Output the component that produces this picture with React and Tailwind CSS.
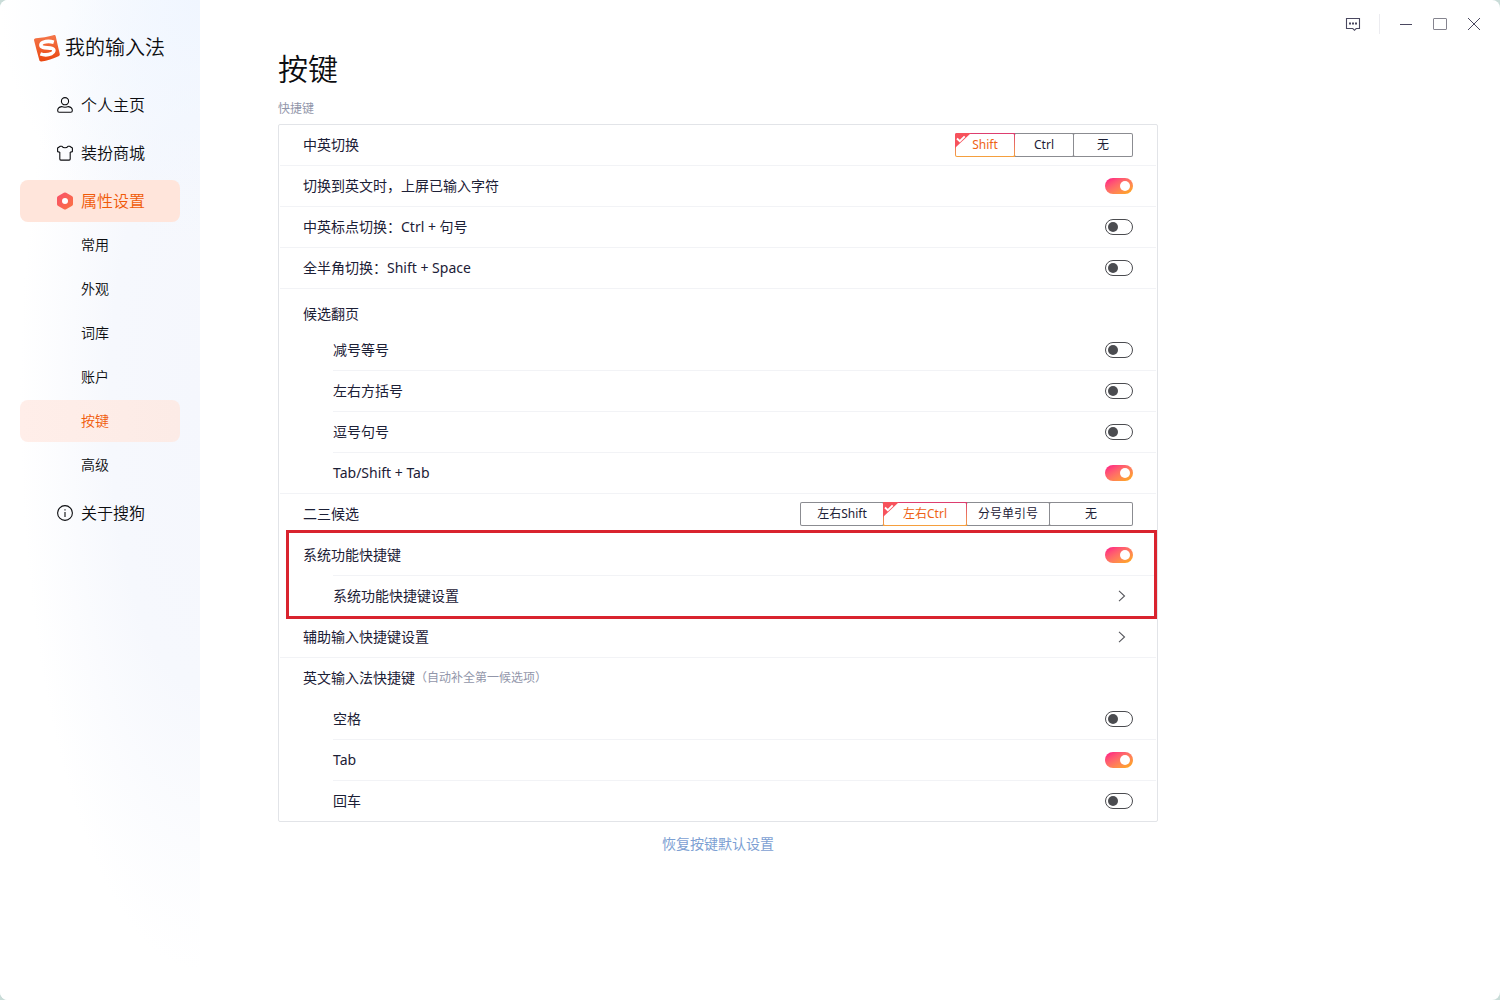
import React, { useState } from 'react'

const SUB_ITEMS = ['常用', '外观', '词库', '账户', '按键', '高级']

const UserIcon = () => (
    <svg width="16" height="16" viewBox="0 0 16 16" fill="none" stroke="currentColor" strokeWidth="1.1">
        <circle cx="8" cy="4.2" r="3.6" />
        <path d="M4.600 9.600c1 .5 2.100.7 3.400.7s2.400-.2 3.400-.7c2.200.4 3.900 1.700 3.900 3.600v.6c0 .9-.6 1.500-1.500 1.500H2.200c-.9 0-1.500-.6-1.500-1.500v-.6c0-1.900 1.700-3.200 3.900-3.600z" />
    </svg>
)

const ShirtIcon = () => (
    <svg width="16" height="16" viewBox="0 0 16 16" fill="none" stroke="currentColor" strokeWidth="1.1" strokeLinejoin="round">
        <path d="M5 1.200c.6 1.100 1.700 1.600 3 1.600s2.400-.5 3-1.600h1.700L15.400 3v3.600l-2.200.6v6.900c0 .6-.4 1-1 1H3.800c-.6 0-1-.4-1-1V7.200L.600 6.600V3l2.700-1.800z" />
    </svg>
)

const SettingsIcon = () => (
    <svg width="16" height="18" viewBox="0 0 16 18">
        <defs>
            <linearGradient id="hex" x1="0" y1="0" x2="1" y2="1">
                <stop offset="0" stopColor="#f94f6c" />
                <stop offset="1" stopColor="#fb7440" />
            </linearGradient>
        </defs>
        <path d="M6.900.700a2.200 2.200 0 0 1 2.200 0l5.700 3.200A2.200 2.200 0 0 1 16 5.900v6.200a2.200 2.200 0 0 1-1.200 2l-5.700 3.200a2.200 2.200 0 0 1-2.200 0l-5.700-3.200a2.200 2.200 0 0 1-1.200-2V5.900a2.200 2.200 0 0 1 1.200-2z" fill="url(#hex)" />
        <circle cx="8" cy="9" r="3" fill="#fff" />
    </svg>
)

const InfoIcon = () => (
    <svg width="16" height="16" viewBox="0 0 16 16" fill="none" stroke="currentColor" strokeWidth="1.1">
        <circle cx="8" cy="8" r="7.400" />
        <path d="M8 7v5" />
        <path d="M8 4.200v1.400" />
    </svg>
)

const Logo = () => (
    <svg width="28" height="28" viewBox="0 0 28 28">
        <defs>
            <linearGradient id="logo" x1="0" y1="0" x2="0" y2="1">
                <stop offset="0" stopColor="#f4764a" />
                <stop offset="1" stopColor="#ea4710" />
            </linearGradient>
        </defs>
        <path d="M3 4.200C8.500 3.800 15 2.700 20.400 1.200c1.300-.3 2.100.1 2.400 1.300 1.200 5.700 2.500 11.400 3.900 17.300.3 1.200-.1 1.900-1.200 2.400-5.500 2.500-11.200 4.300-17 5.300-1.200.2-1.900-.2-2.200-1.400C4.500 19.600 2.700 13 1.100 6.500.800 5.100 1.500 4.300 3 4.200z" fill="url(#logo)" />
        <path d="M20.800 8.200c-3.800-1.200-7.800-1-10.700.2-2.900 1.300-2.900 3.900-.2 4.900 2.600.9 6.400.2 9 1.100 2.900 1 2.500 3.900-.5 5.200-3.300 1.500-7.300 1.600-11 .3" fill="none" stroke="#fff" strokeWidth="3.600" />
    </svg>
)

const NavItem = ({ icon, label, active }) => (
    <a
        href="#"
        className={`flex h-[42px] items-center gap-2 rounded-lg pl-[37px] text-base ${active ? 'bg-[#ffe5db] text-[#f05a08]' : 'text-[#0c0d10]'}`}
    >
        {icon}
        {label}
    </a>
)

const SubItem = ({ label, active }) => (
    <a
        href="#"
        className={`flex h-[42px] items-center rounded-lg pl-[61px] text-sm ${active ? 'bg-linear-to-r from-[#ffeee9] to-[#fcebe6] text-[#f05a08]' : 'text-[#0c0d10]'}`}
    >
        {label}
    </a>
)

const Sidebar = () => (
    <aside className="w-[200px] shrink-0 bg-[radial-gradient(ellipse_200px_240px_at_100%_0%,#f0f6ff_0%,transparent_100%),radial-gradient(ellipse_180px_570px_at_100%_40%,#f5f7fd_0%,#f6f8fd_50%,#ffffff_100%)] px-5 font-[350]">
        <div className="flex h-[84px] items-center gap-1 pt-3 pl-[13px] text-xl text-[#0c0d10]">
            <Logo />
            我的输入法
        </div>
        <nav className="flex flex-col gap-1.5">
            <NavItem icon={<UserIcon />} label="个人主页" />
            <NavItem icon={<ShirtIcon />} label="装扮商城" />
            <div className="flex flex-col gap-0.5">
                <NavItem icon={<SettingsIcon />} label="属性设置" active />
                {SUB_ITEMS.map(item => <SubItem key={item} label={item} active={item === '按键'} />)}
            </div>
            <NavItem icon={<InfoIcon />} label="关于搜狗" />
        </nav>
    </aside>
)

const TitleBar = () => (
    <header className="flex h-12 items-center justify-end pr-[19px] text-[#4a4860]">
        <button aria-label="反馈">
            <svg width="16" height="16" viewBox="0 0 16 16" fill="none" stroke="currentColor" strokeWidth="1.100">
                <path d="M1.500 2.500h13v10h-3.300L9.500 14.300 7.800 12.500H1.500z" />
                <path d="M4 7.500h2M7 7.500h2M10 7.500h2" strokeWidth="2" />
            </svg>
        </button>
        <span className="mr-[19px] ml-[18px] h-5 w-px bg-[#ececf0]" />
        <div className="flex items-center gap-5">
            <button aria-label="最小化">
                <svg width="14" height="14" viewBox="0 0 14 14"><path d="M1 7.500h12" stroke="currentColor" /></svg>
            </button>
            <button aria-label="最大化">
                <svg width="14" height="14" viewBox="0 0 14 14"><rect x=".5" y="1.500" width="13" height="11" rx=".5" fill="none" stroke="#85848f" /></svg>
            </button>
            <button aria-label="关闭">
                <svg width="14" height="14" viewBox="0 0 14 14"><path d="M1 1l12 12M13 1L1 13" stroke="currentColor" /></svg>
            </button>
        </div>
    </header>
)

const Row = ({ indent, line = true, children }) => (
    <div className={`mr-px ${indent ? 'ml-[54px]' : 'ml-px'} ${line ? 'border-b border-[#f2f3f6]' : ''}`}>
        <div className={`flex h-10 items-center justify-between pr-[23px] ${indent ? '' : 'pl-[23px]'}`}>
            {children}
        </div>
    </div>
)

const Divider = ({ indent }) => (
    <div className={`mr-px border-t border-[#f2f3f6] ${indent ? 'ml-[54px]' : 'ml-px'}`} />
)

const ToggleRow = ({ id, label, on = false, indent, line }) => {
    const [checked, setChecked] = useState(on)
    return (
        <Row indent={indent} line={line}>
            <label htmlFor={id}>{label}</label>
            <input
                id={id}
                type="checkbox"
                checked={checked}
                onChange={e => setChecked(e.target.checked)}
                className="flex h-4 w-7 appearance-none items-center rounded-full border border-[#4b4c50] px-0.5 before:size-2.5 before:rounded-full before:bg-[#4b4c50] checked:justify-end checked:border-0 checked:bg-linear-to-br checked:from-[#ff2680] checked:from-10% checked:to-[#ff9f2c] checked:to-85% checked:px-[3px] checked:before:bg-white"
            />
        </Row>
    )
}

const ChoiceRow = ({ name, label, options, initial, wide, line }) => {
    const [value, setValue] = useState(initial)
    return (
        <Row line={line}>
            <span id={name}>{label}</span>
            <div role="radiogroup" aria-labelledby={name} className="flex text-xs">
                {options.map((option, i) => {
                    const selected = option === value
                    return (
                        <label
                            key={option}
                            className={`relative flex h-6 overflow-hidden p-px first:rounded-l-xs last:rounded-r-xs ${wide ? 'w-[84px]' : 'w-[60px]'} ${i > 0 ? '-ml-px' : ''} ${selected ? 'z-10 bg-linear-to-b from-[#dc3b70] to-[#f5a13c] text-[#ee6216]' : 'bg-[#8b8c91]'}`}
                        >
                            <input
                                type="radio"
                                name={name}
                                checked={selected}
                                onChange={() => setValue(option)}
                                className="sr-only"
                            />
                            <span className="flex flex-1 items-center justify-center rounded-[1px] bg-white">{option}</span>
                            {selected && (
                                <svg className="absolute top-0 left-0" width="16" height="15" viewBox="0 0 16 15">
                                    <path d="M0 0h16L0 15z" fill="#f7525c" />
                                    <path d="M2 5.500l2.800 2.700 4.900-4.900" fill="none" stroke="#fff" strokeWidth="1.900" />
                                </svg>
                            )}
                        </label>
                    )
                })}
            </div>
        </Row>
    )
}

const LinkRow = ({ label, indent }) => (
    <Row indent={indent}>
        <button className="flex h-full flex-1 items-center justify-between pr-[7px]">
            {label}
            <svg width="8" height="12" viewBox="0 0 8 12" fill="none" stroke="#55565c" strokeWidth="1.100">
                <path d="M1 .800L6.500 6 1 11.200" />
            </svg>
        </button>
    </Row>
)

export default function App() {
    return (
        <div lang="zh-CN" className="min-h-screen bg-[#c9dcd8] font-['Noto_Sans','Noto_Sans_CJK_SC',sans-serif]">
            <div className="flex min-h-screen overflow-hidden rounded-lg bg-white">
                <Sidebar />
                <main className="min-w-0 flex-1">
                    <TitleBar />
                    <div className="max-w-[958px] pl-[78px] text-sm text-[#1c2036]">
                        <h1 className="text-3xl leading-[42px] font-[350] text-[#0c0d10]">按键</h1>
                        <h2 className="mt-2.5 mb-1.5 text-xs leading-[18px] text-[#9296aa]">快捷键</h2>

                        <section className="rounded-xs border border-[#e2e4e8]">
                            <ChoiceRow name="language" label="中英切换" options={['Shift', 'Ctrl', '无']} initial="Shift" />
                            <ToggleRow id="commit" label="切换到英文时，上屏已输入字符" on />
                            <ToggleRow id="punctuation" label="中英标点切换：Ctrl + 句号" />
                            <ToggleRow id="width" label="全半角切换：Shift + Space" />

                            <h3 className="flex h-[41px] items-center pt-2 pl-6">候选翻页</h3>
                            <ToggleRow id="minus" label="减号等号" indent />
                            <ToggleRow id="bracket" label="左右方括号" indent />
                            <ToggleRow id="comma" label="逗号句号" indent />
                            <ToggleRow id="page-tab" label="Tab/Shift + Tab" indent on line={false} />
                            <Divider />

                            <ChoiceRow name="candidate" label="二三候选" options={['左右Shift', '左右Ctrl', '分号单引号', '无']} initial="左右Ctrl" wide line={false} />

                            {/* outlined group */}
                            <div className="relative pt-px">
                                <ToggleRow id="system" label="系统功能快捷键" on line={false} />
                                <Divider indent />
                                <LinkRow label="系统功能快捷键设置" indent />
                                <div className="pointer-events-none absolute -top-1 right-0 -bottom-0.5 left-[7px] border-3 border-[#d9232e]" />
                            </div>
                            <LinkRow label="辅助输入快捷键设置" />

                            <h3 className="mb-px flex h-10 items-center pl-6">
                                英文输入法快捷键
                                <span className="text-xs text-[#9296aa]">（自动补全第一候选项）</span>
                            </h3>
                            <ToggleRow id="space" label="空格" indent />
                            <ToggleRow id="tab" label="Tab" indent on />
                            <ToggleRow id="enter" label="回车" indent line={false} />
                        </section>

                        <div className="mt-3 text-center">
                            <a href="#" className="text-[#7d9fd3]">恢复按键默认设置</a>
                        </div>
                    </div>
                </main>
            </div>
        </div>
    )
}
